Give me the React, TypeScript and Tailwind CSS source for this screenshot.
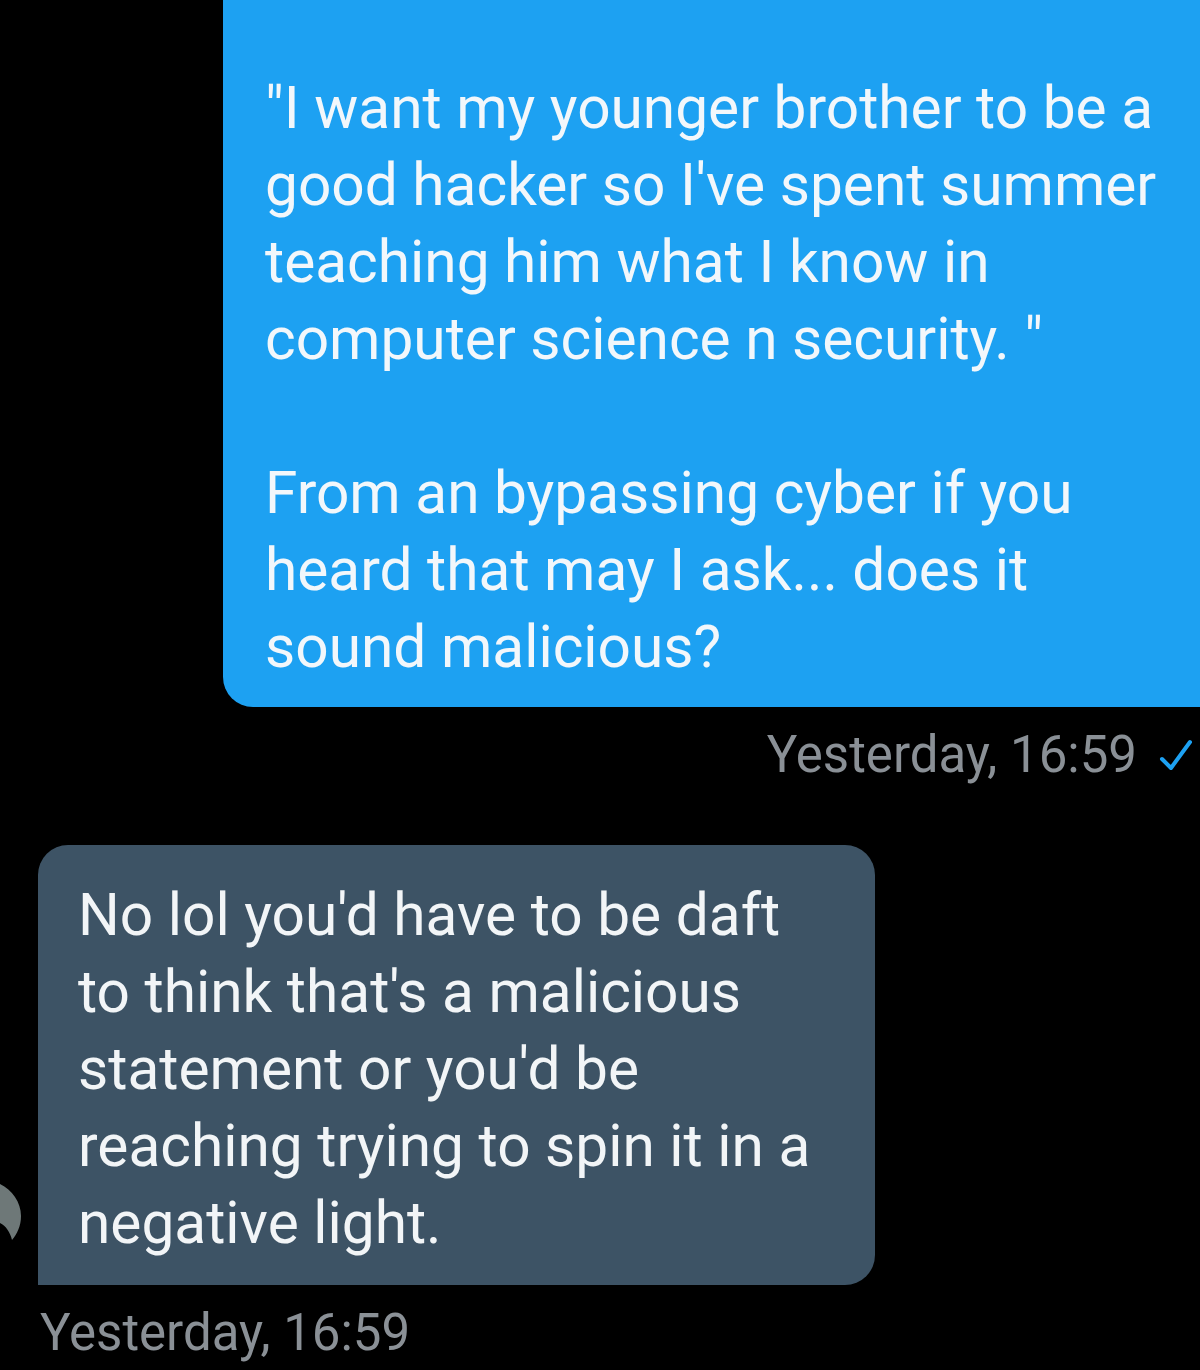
import React from "react";

const font = { fontFamily: "Roboto, 'Noto Sans', Arial, sans-serif" };

export default function App() {
  return (
    <div
      className="w-[1200px] h-[1370px] bg-black overflow-hidden flex flex-col"
      style={font}
    >
      {/* Sent bubble */}
      <div className="flex justify-end">
        <div className="ml-[223px] flex-1 bg-[#1da1f2] rounded-bl-[30px] pl-[42px] pr-[20px] pt-[70px] pb-[21px] text-[58.6px] leading-[77px] text-[#f2f7fb]">
          <p>"I want my younger brother to be a good hacker so I've spent summer teaching him what I know in computer science n security. "</p>
          <p className="h-[77px]"></p>
          <p>From an bypassing cyber if you heard that may I ask... does it sound malicious?</p>
        </div>
      </div>

      {/* Sent timestamp */}
      <div className="mt-[18px] flex items-center justify-end pr-[7px] h-[60px]">
        <span className="text-[51px] leading-[60px] text-[#8a9096]">Yesterday, 16:59</span>
        <svg
          className="ml-[22px]"
          width="34"
          height="34"
          viewBox="0 0 34 34"
          fill="none"
        >
          <path
            d="M3 21 L12 30 L31 4"
            stroke="#1da1f2"
            strokeWidth="4"
            strokeLinecap="round"
            strokeLinejoin="round"
          />
        </svg>
      </div>

      {/* Received bubble */}
      <div className="mt-[60px] flex items-end">
        <div className="w-[38px] flex items-end pb-[43px]">
          <svg width="24" height="60" viewBox="0 0 24 60">
            <path
              d="M0 2 C12 8 21 20 21 34 C21 44 17 52 12 58 C10 50 6 44 0 41 Z"
              fill="#6e7878"
            />
          </svg>
        </div>
        <div className="w-[837px] bg-[#3d5365] rounded-tl-[30px] rounded-tr-[30px] rounded-br-[30px] pl-[40px] pr-[50px] pt-[32px] pb-[23px] text-[58.6px] leading-[77px] text-[#f2f5f7]">
          <p>No lol you'd have to be daft to think that's a malicious statement or you'd be reaching trying to spin it in a negative light.</p>
        </div>
      </div>

      {/* Received timestamp */}
      <div className="mt-[18px] pl-[40px] h-[60px] flex items-center">
        <span className="text-[51px] leading-[60px] text-[#8a9096]">Yesterday, 16:59</span>
      </div>
    </div>
  );
}
